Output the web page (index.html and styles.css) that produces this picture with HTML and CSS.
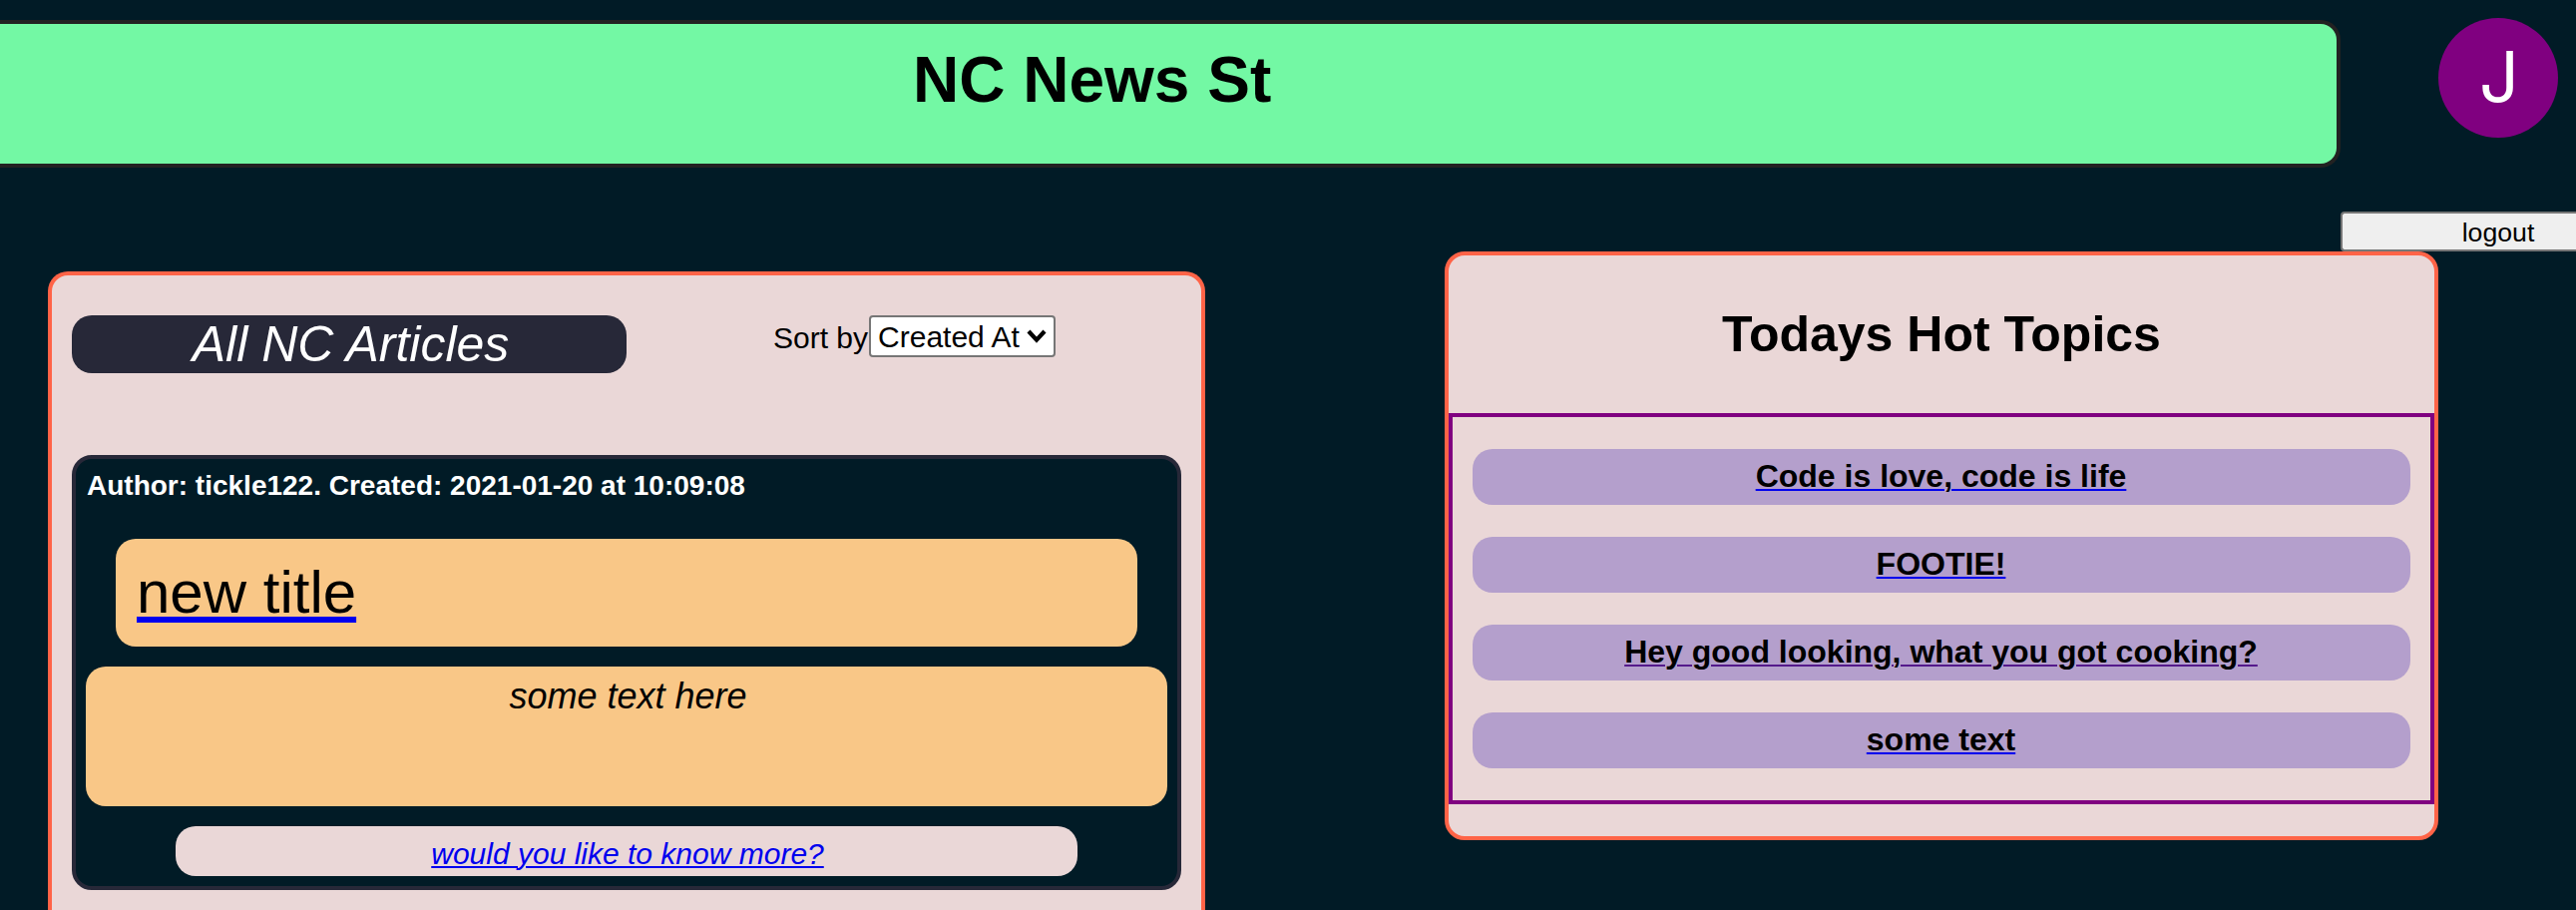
FILE: index.html
```html
<!DOCTYPE html>
<html lang="en">
<head>
<meta charset="utf-8">
<title>NC News</title>
<link rel="stylesheet" href="styles.css">
</head>
<body>
<div class="top">
  <header class="banner"><h1 class="banner-title">NC News St</h1></header>
  <div class="user">
    <div class="avatar">J</div>
    <button class="logout">logout</button>
  </div>
</div>
<main class="main">
  <section class="articles">
    <div class="articles-head">
      <h2 class="articles-title">All NC Articles</h2>
      <div class="sort">
        <span class="sort-label">Sort by</span>
        <div class="select">Created At<svg class="chevron" viewBox="0 0 20 14"><path d="M2 2 L10 10.6 L18 2" fill="none" stroke="#000" stroke-width="4.2"/></svg></div>
      </div>
    </div>
    <article class="card">
      <p class="meta">Author: tickle122. Created: 2021-01-20 at 10:09:08</p>
      <div class="card-title"><a class="title-link" href="#"><span class="black">new title</span></a></div>
      <p class="card-body">some text here</p>
      <div class="more"><a class="more-link" href="#">would you like to know more?</a></div>
    </article>
  </section>
  <aside class="topics">
    <h2 class="topics-title">Todays Hot Topics</h2>
    <ul class="topic-list">
      <li class="topic"><a class="topic-link" href="#"><span class="black">Code is love, code is life</span></a></li>
      <li class="topic"><a class="topic-link" href="#"><span class="black">FOOTIE!</span></a></li>
      <li class="topic"><a class="topic-link seen" href="#"><span class="black">Hey good looking, what you got cooking?</span></a></li>
      <li class="topic"><a class="topic-link" href="#"><span class="black">some text</span></a></li>
    </ul>
  </aside>
</main>
</body>
</html>
```
FILE: styles.css
```css
* { box-sizing: border-box; margin: 0; padding: 0; }

body {
  width: 2582px;
  height: 912px;
  overflow: hidden;
  background: #011b26;
  color: #000;
  font-family: Arial, "Liberation Sans", sans-serif;
}

.top {
  display: flex;
  align-items: flex-start;
  height: 252px;
}

.banner {
  flex: none;
  width: 2346px;
  height: 148px;
  margin-top: 20px;
  padding: 19px 0 0 915px;
  background: #73f8a4;
  border: 4px solid #222;
  border-left: 0;
  border-radius: 0 20px 20px 0;
}

.banner-title { font-size: 64px; line-height: 74px; }

.user {
  flex: none;
  display: flex;
  flex-direction: column;
  align-items: center;
  width: 236px;
  padding-top: 18px;
}

.avatar {
  width: 120px;
  height: 120px;
  margin-left: 80px;
  padding-left: 2px;
  border-radius: 50%;
  background: #800080;
  color: #fff;
  font-family: Inter, Roboto, sans-serif;
  font-size: 70px;
  font-weight: 400;
  line-height: 118px;
  text-align: center;
}

/* the label stays centred under the avatar while the button runs to the window edge */
.logout {
  width: 100%;
  height: 40px;
  margin-top: 74px;
  padding: 1px 0 0 78px;
  background: #efefef;
  border: 2px solid #767676;
  border-right: 0;
  border-radius: 4px 0 0 4px;
  color: #000;
  font: 26.667px/36px Arial, "Liberation Sans", sans-serif;
}

.main {
  display: flex;
  align-items: flex-start;
  gap: 240px;
  padding-left: 48px;
}

.articles {
  flex: none;
  width: 1160px;
  height: 640px;
  margin-top: 20px;
  padding: 40px 20px 0;
  background: #ead7d7;
  border: 4px solid #ff6347;
  border-bottom: 0;
  border-radius: 20px 20px 0 0;
}

.articles-head {
  display: flex;
  align-items: flex-start;
  height: 140px;
}

.articles-title {
  width: 556px;
  height: 58px;
  padding-left: 3px;
  border-radius: 20px;
  background: #272838;
  color: #fff;
  font-size: 50px;
  font-style: italic;
  font-weight: 400;
  line-height: 58px;
  text-align: center;
}

.sort {
  display: flex;
  margin-left: 147px;
  font-size: 30px;
  line-height: 44px;
}

.sort-label { padding-top: 1px; }

.select {
  display: flex;
  align-items: center;
  width: 187px;
  height: 42px;
  margin-left: 1px;
  padding: 2px 0 0 7px;
  background: #fff;
  border: 2px solid #767676;
  border-radius: 4px;
}

.chevron { width: 20px; height: 14px; margin: -3px 0 0 7px; }

.card {
  height: 436px;
  padding: 10px;
  background: #011b26;
  border: 4px solid #272838;
  border-radius: 20px;
}

.meta {
  height: 70px;
  padding: 1px 0 0 1px;
  color: #fff;
  font-size: 28px;
  font-weight: 700;
  line-height: 32px;
}

.card-title {
  height: 108px;
  margin: 0 30px 20px;
  padding: 20px 20px 20px 21px;
  background: #f9c787;
  border-radius: 20px;
  font-size: 60px;
  line-height: 68px;
}

.title-link {
  color: #0000ee;
  text-decoration-thickness: 6px;
  text-underline-offset: 4px;
}
.black { color: #000; }

.card-body {
  height: 140px;
  margin-bottom: 20px;
  padding: 10px 0 0 3px;
  background: #f9c787;
  border-radius: 20px;
  font-size: 36px;
  font-style: italic;
  line-height: 40px;
  text-align: center;
}

.more {
  height: 50px;
  margin: 0 90px;
  padding: 10px 0 0 2px;
  background: #ead7d7;
  border-radius: 20px;
  font-size: 30px;
  font-style: italic;
  line-height: 36px;
  text-align: center;
}

.more-link {
  color: #0000ee;
  text-decoration-thickness: 2px;
  text-underline-offset: 2px;
}

.topics {
  flex: none;
  width: 996px;
  height: 590px;
  background: #ead7d7;
  border: 4px solid #ff6347;
  border-radius: 20px;
}

.topics-title {
  height: 158px;
  padding-top: 50px;
  font-size: 50px;
  line-height: 58px;
  text-align: center;
}

.topic-list {
  display: flex;
  flex-direction: column;
  gap: 32px;
  height: 392px;
  padding: 32px 20px;
  border: 4px solid #800080;
  list-style: none;
}

.topic {
  height: 56px;
  padding: 9px 1px 0 0;
  background: #b49fcc;
  border-radius: 20px;
  font-size: 32px;
  font-weight: 700;
  line-height: 36px;
  text-align: center;
}

.topic-link {
  color: #0000ee;
  text-decoration-thickness: 2px;
  text-underline-offset: 2px;
}
.topic-link.seen { color: #551a8b; }
```
